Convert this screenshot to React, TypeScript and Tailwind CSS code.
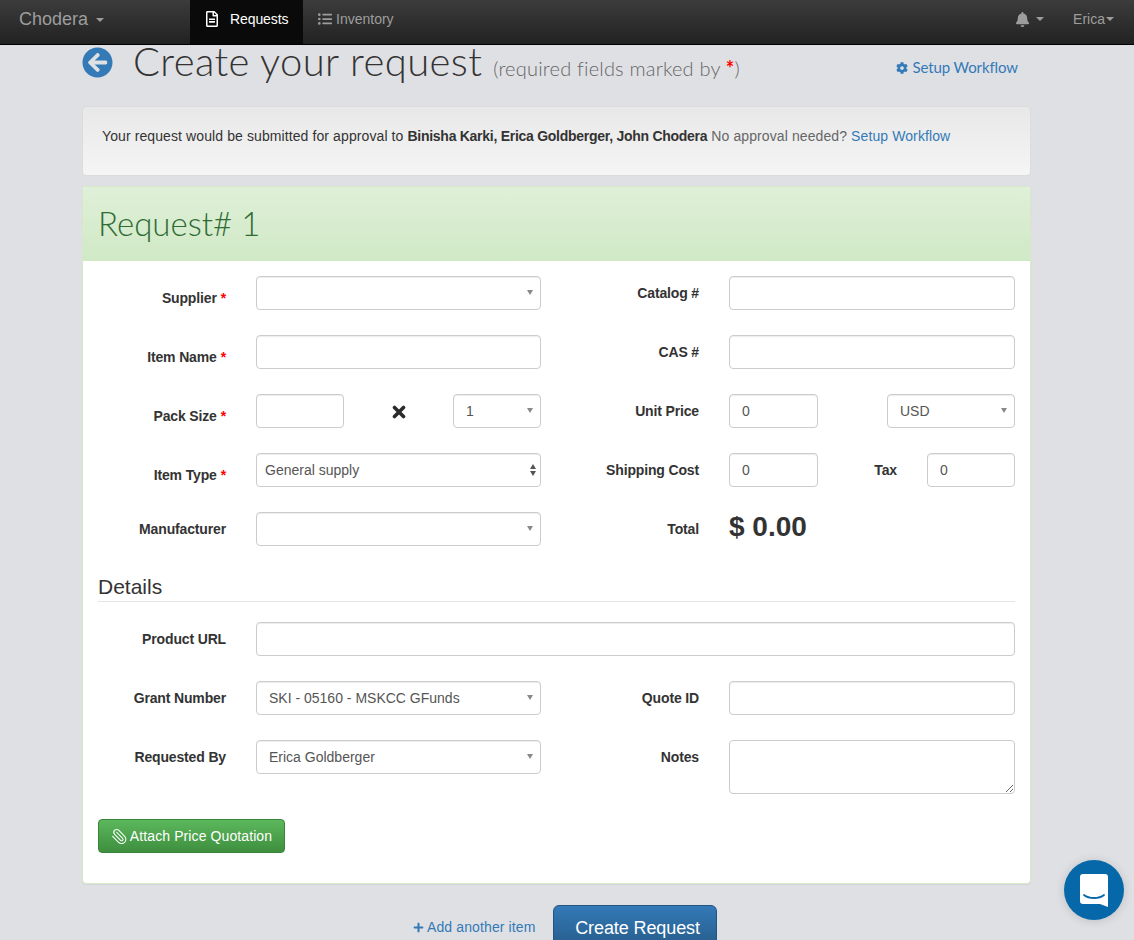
import { ReactNode } from "react"
import { FaArrowCircleLeft, FaBell, FaCog, FaListUl, FaPlus, FaRegFileAlt } from "react-icons/fa"
import { Paperclip } from "lucide-react"

const controlClass = "h-[34px] rounded-[4px] border border-[#ccc] bg-white shadow-[inset_0_1px_1px_rgba(0,0,0,0.075)]"

function Caret({ className }: { className: string }) {
  return <span className={`inline-block h-0 w-0 border-x-[4px] border-t-[4px] border-x-transparent ${className}`} />
}

function Input({ value, className }: { value?: string; className: string }) {
  return (
    <input
      readOnly
      value={value ?? ""}
      className={`${controlClass} ${className} px-3 text-sm text-[#555] outline-none`}
    />
  )
}

function Select({ value, className, stepper, pad }: { value?: string; className: string; stepper?: boolean; pad: string }) {
  return (
    <div className={`${controlClass} ${className} ${pad} flex items-center justify-between pb-[1px] text-sm text-[#555]`}>
      <span>{value}</span>
      {stepper ? (
        <span className="mr-[-8px] flex flex-col gap-[2px]">
          <span className="h-0 w-0 border-x-[3.5px] border-b-[5px] border-x-transparent border-b-[#555]" />
          <span className="h-0 w-0 border-x-[3.5px] border-t-[5px] border-x-transparent border-t-[#555]" />
        </span>
      ) : (
        <span className="mr-[-5px] h-0 w-0 border-x-[3px] border-t-[5px] border-x-transparent border-t-[#888]" />
      )}
    </div>
  )
}

function Label({ children, width, required }: { children: ReactNode; width: string; required?: boolean }) {
  return (
    <label
      className={`${width} flex h-[34px] shrink-0 justify-end text-sm font-bold tracking-[-0.15px] text-[#333] ${required ? "items-center pt-[10px]" : "items-center"}`}
    >
      {children}
      {required && <span className="ml-1 text-[#f00]">*</span>}
    </label>
  )
}

function Row({ left, right }: { left: ReactNode; right: ReactNode }) {
  return (
    <div className="mb-[25px] flex items-start">
      <div className="flex w-[443px] shrink-0 items-start gap-[30px]">{left}</div>
      <div className="flex w-[474px] items-start gap-[30px]">{right}</div>
    </div>
  )
}

function Navbar() {
  return (
    <nav className="flex h-[45px] items-stretch border-b border-black bg-gradient-to-b from-[#3c3c3c] to-[#222] text-sm text-[#9d9d9d]">
      <a className="ml-[19px] flex w-[171px] items-center gap-2 pb-[6px] text-lg">
        Chodera <Caret className="mt-[2px] border-t-[#9d9d9d]" />
      </a>
      <a className="flex w-[113px] items-center bg-[#0a0a0a] pb-[6px] pl-[14px] text-white">
        <FaRegFileAlt size={16} />
        <span className="ml-[10px] tracking-[-0.1px]">Requests</span>
      </a>
      <a className="ml-[15px] flex items-center pb-[6px]">
        <FaListUl size={14} />
        <span className="ml-1">Inventory</span>
      </a>
      <div className="ml-auto flex items-center pb-[6px]">
        <FaBell size={15} />
        <Caret className="ml-[6px] border-t-[#9d9d9d]" />
        <span className="ml-[29px]">Erica</span>
        <Caret className="mr-[20px] ml-[1px] border-t-[#9d9d9d]" />
      </div>
    </nav>
  )
}

function RequestPanel() {
  return (
    <section className="overflow-hidden rounded-[4px] border border-[#d6e9c6] bg-white shadow-[0_1px_1px_rgba(0,0,0,0.05)]">
      <div className="flex h-[74px] items-center bg-gradient-to-b from-[#dff0d8] to-[#d0e9c6] px-[15px] font-['Lato',sans-serif] text-[33px] font-light text-[#2f6b35]">
        Request# 1
      </div>
      <div className="px-[15px] pt-[15px] pb-[30px]">
        <Row
          left={<><Label width="w-[128px]" required>Supplier</Label><Select className="w-[285px]" pad="px-3" /></>}
          right={<><Label width="w-[158px]">Catalog #</Label><Input className="w-[286px]" /></>}
        />
        <Row
          left={<><Label width="w-[128px]" required>Item Name</Label><Input className="w-[285px]" /></>}
          right={<><Label width="w-[158px]">CAS #</Label><Input className="w-[286px]" /></>}
        />
        <Row
          left={
            <>
              <Label width="w-[128px]" required>Pack Size</Label>
              <div className="flex w-[285px] items-center justify-between">
                <Input className="w-[88px]" />
                <svg width="14" height="14" viewBox="0 0 14 14" className="mt-[1px]">
                  <path d="M2.5 2.5l9 9M11.5 2.5l-9 9" stroke="#2b2b2b" strokeWidth="3.6" strokeLinecap="round" />
                </svg>
                <Select value="1" className="w-[88px]" pad="px-3" />
              </div>
            </>
          }
          right={
            <>
              <Label width="w-[158px]">Unit Price</Label>
              <div className="flex w-[286px] justify-between">
                <Input value="0" className="w-[89px]" />
                <Select value="USD" className="w-[128px]" pad="px-3" />
              </div>
            </>
          }
        />
        <Row
          left={<><Label width="w-[128px]" required>Item Type</Label><Select value="General supply" stepper className="w-[285px]" pad="pl-2 pr-3" /></>}
          right={
            <>
              <Label width="w-[158px]">Shipping Cost</Label>
              <div className="flex w-[286px] items-center">
                <Input value="0" className="w-[89px]" />
                <span className="ml-auto text-sm font-bold tracking-[-0.15px] text-[#333]">Tax</span>
                <Input value="0" className="ml-[30px] w-[88px]" />
              </div>
            </>
          }
        />
        <Row
          left={<><Label width="w-[128px]">Manufacturer</Label><Select className="w-[285px]" pad="px-3" /></>}
          right={
            <>
              <Label width="w-[158px]">Total</Label>
              <span className="flex h-[34px] items-center pb-[4px] text-[28px] font-bold text-[#333]">$ 0.00</span>
            </>
          }
        />
        <h4 className="mt-[28px] border-b border-[#e5e5e5] pb-[1px] text-[21px] leading-[26px] text-[#333]">Details</h4>
        <div className="mt-[20px] mb-[25px] flex items-center gap-[30px]">
          <Label width="w-[128px]">Product URL</Label>
          <Input className="w-[759px]" />
        </div>
        <Row
          left={<><Label width="w-[128px]">Grant Number</Label><Select value="SKI - 05160 - MSKCC GFunds" className="w-[285px]" pad="px-3" /></>}
          right={<><Label width="w-[158px]">Quote ID</Label><Input className="w-[286px]" /></>}
        />
        <Row
          left={<><Label width="w-[128px]">Requested By</Label><Select value="Erica Goldberger" className="w-[285px]" pad="px-3" /></>}
          right={
            <>
              <Label width="w-[158px]">Notes</Label>
              <textarea readOnly className="h-[54px] w-[286px] rounded-[4px] border border-[#ccc] bg-white px-3 py-1.5 text-sm outline-none" />
            </>
          }
        />
        <button className="flex h-[34px] w-[187px] items-center justify-center rounded-[4px] border border-[#398439] bg-gradient-to-b from-[#5cb85c] to-[#3e8f3e] text-sm tracking-[0.1px] text-white">
          <Paperclip size={17} strokeWidth={1.5} className="mr-[2px] -scale-x-100" />
          Attach Price Quotation
        </button>
      </div>
    </section>
  )
}

export default function App() {
  return (
    <div className="relative h-[940px] overflow-hidden bg-[#dfe0e4] font-['Liberation_Sans',Arial,sans-serif] text-sm text-[#333]">
      <Navbar />
      <main className="mx-[82px] w-[949px]">
        <header className="flex h-[61px] items-start">
          <FaArrowCircleLeft size={31} className="mt-[2px] text-[#337ab7]" />
          <h1 className="ml-[20px] mt-[-2px] flex items-baseline font-['Lato',sans-serif] text-[40px] leading-[36px] font-light tracking-[0.4px] text-[#333]">
            Create your request
            <small className="ml-[11px] text-[20px] font-light tracking-[0.2px] text-[#666]">
              (required fields marked by <span className="font-bold text-[#f00]">*</span>)
            </small>
          </h1>
          <a className="mt-[12px] mr-[13px] ml-auto flex items-center gap-1 font-['Lato',sans-serif] text-[15px] text-[#337ab7]">
            <FaCog size={12} />
            <span className="tracking-[-0.1px]">Setup Workflow</span>
          </a>
        </header>
        <div className="mb-[10px] flex h-[70px] items-start rounded-[4px] border border-[#dcdcdc] bg-gradient-to-b from-[#e8e8e8] to-[#f5f5f5] pt-[20px] pl-[19px]">
          <p className="leading-[18px] tracking-[0.1px]">
            Your request would be submitted for approval to <b className="tracking-[-0.27px]">Binisha Karki, Erica Goldberger, John Chodera</b>{" "}
            <span className="text-[#666]">No approval needed?</span> <a className="text-[#337ab7]">Setup Workflow</a>
          </p>
        </div>
        <RequestPanel />
        <div className="mt-[21px] flex items-start">
          <a className="mt-[12px] ml-[331px] flex items-center gap-[3px] text-sm tracking-[0.12px] text-[#337ab7]">
            <FaPlus size={11} />
            Add another item
          </a>
          <button className="ml-[17px] h-[46px] w-[164px] rounded-[6px] border border-[#245580] bg-gradient-to-b from-[#337ab7] to-[#265a88] pl-[6px] pb-[1px] text-lg tracking-[-0.1px] text-white">
            Create Request
          </button>
        </div>
      </main>
      <div className="absolute top-[860px] left-[1064px] flex h-[60px] w-[60px] items-center justify-center rounded-full bg-[#0668a8] shadow-[0_1px_10px_rgba(0,0,0,0.15)]">
        <svg width="28" height="33" viewBox="0 0 28 33">
          <path d="M3 0h22a3 3 0 0 1 3 3v30l-8-3H3a3 3 0 0 1-3-3V3a3 3 0 0 1 3-3z" fill="#fff" />
          <path d="M4 21c5 4 15 4 20 0" fill="none" stroke="#0668a8" strokeWidth="1.8" strokeLinecap="round" />
        </svg>
      </div>
    </div>
  )
}
